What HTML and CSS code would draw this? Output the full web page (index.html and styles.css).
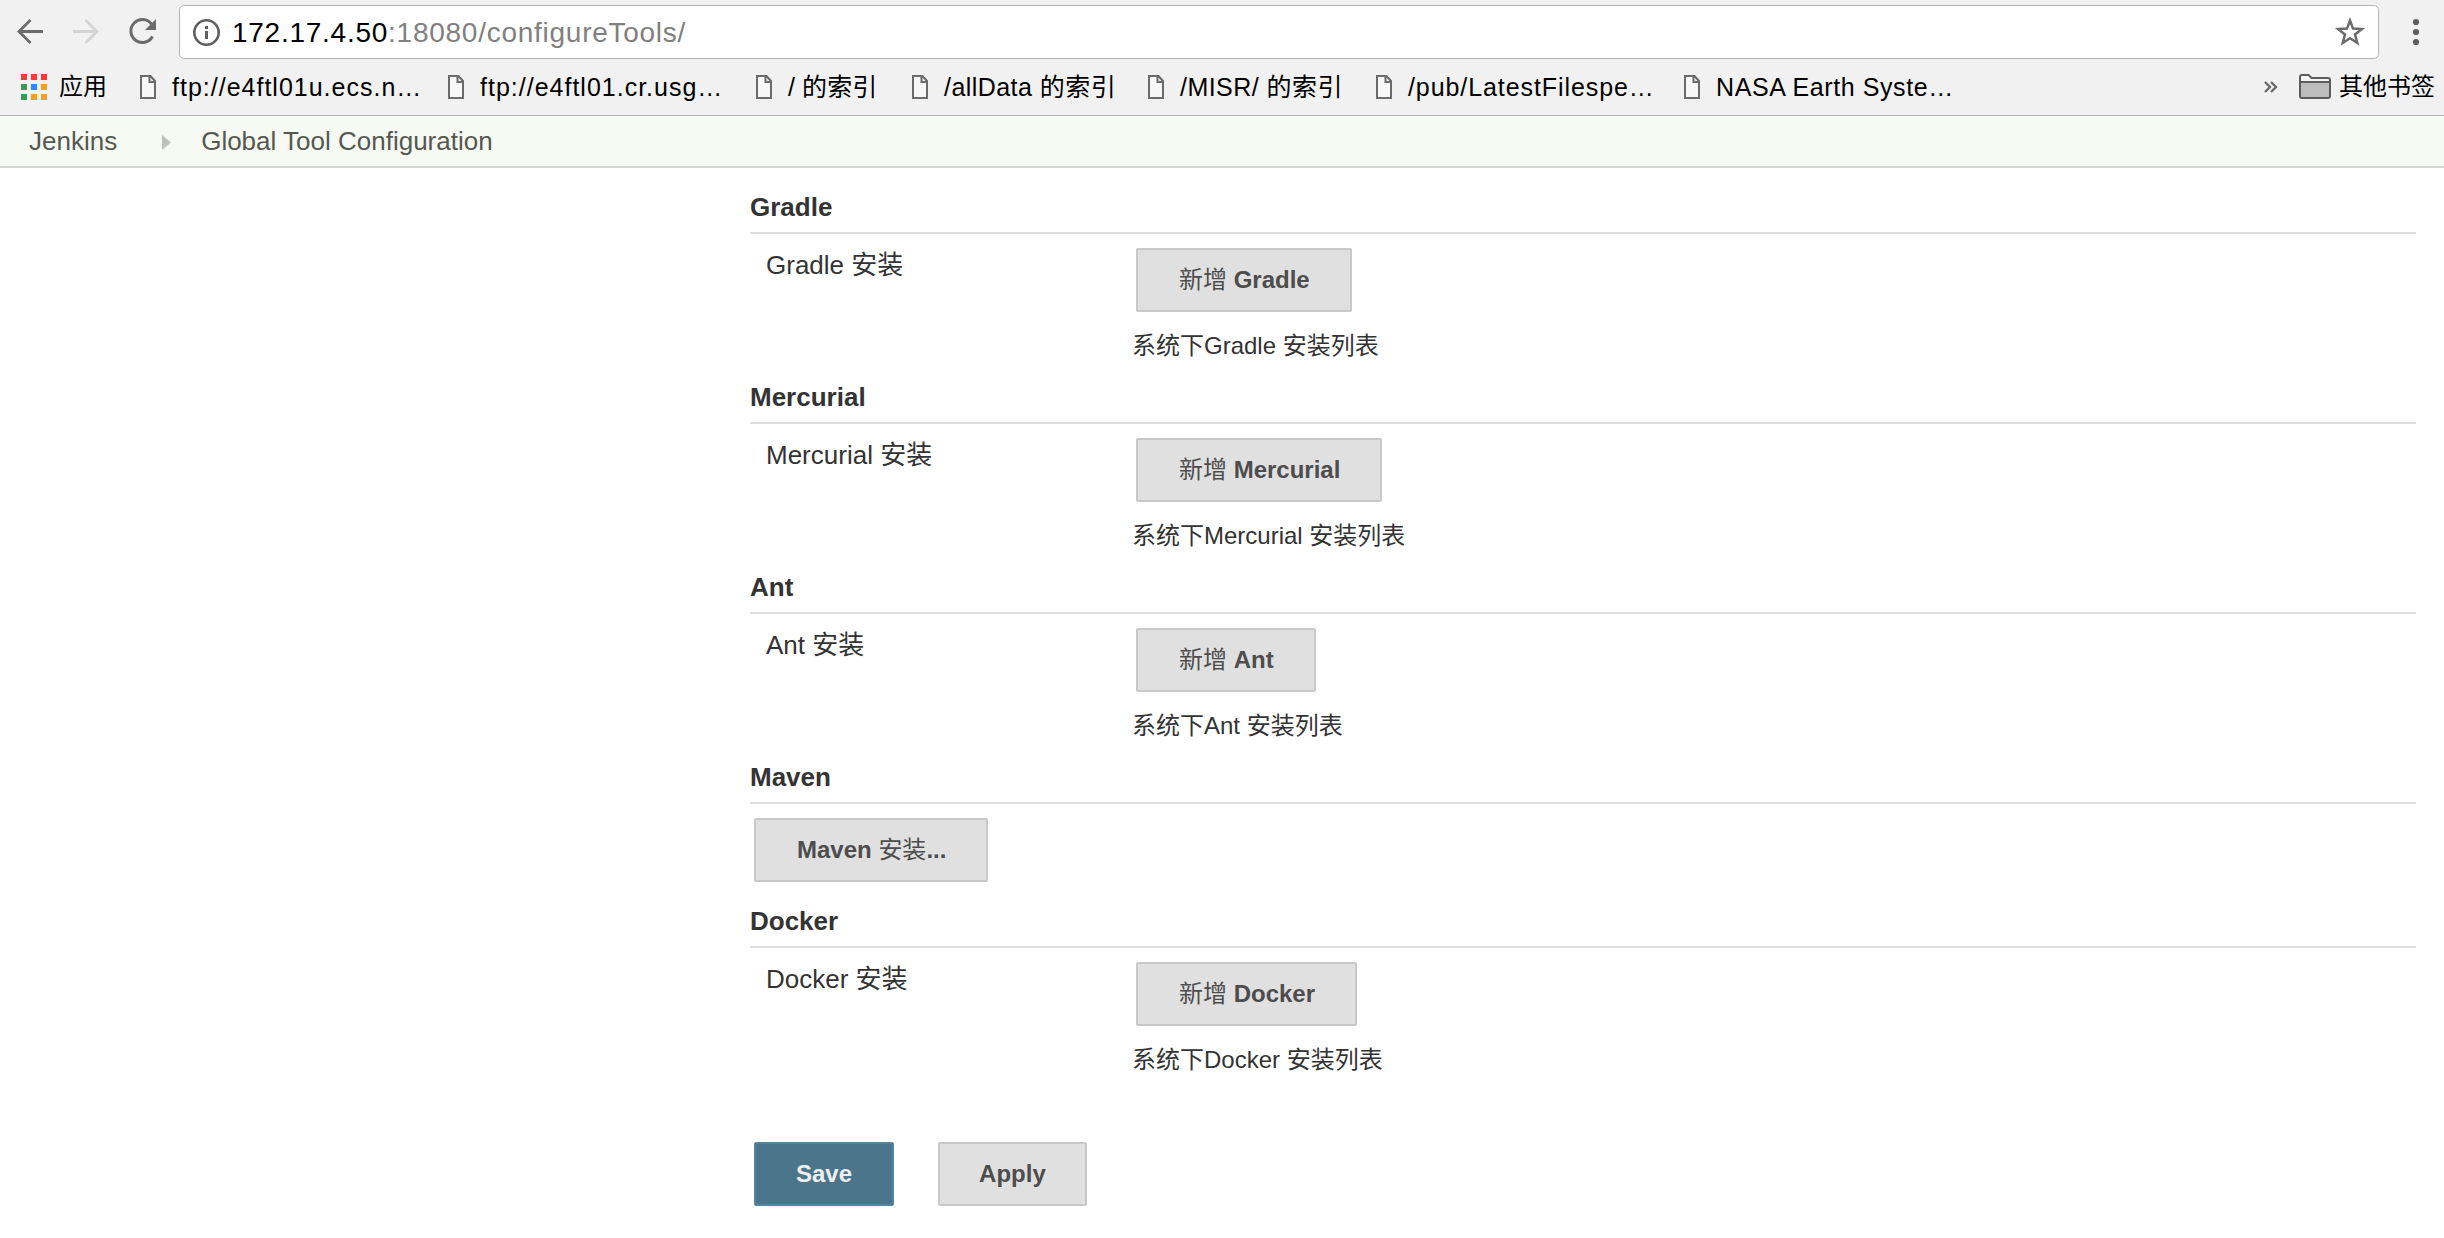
FILE: index.html
```html
<!DOCTYPE html>
<html lang="zh-CN">
<head>
<meta charset="utf-8">
<title>Global Tool Configuration</title>
<link rel="stylesheet" href="styles.css">
</head>
<body>
<svg class="defs" width="0" height="0"><defs>
<symbol id="page" viewBox="0 0 18 24"><path d="M1 1H10.500L15 6V23H1Z M9.500 1V7H15" fill="#f7f7f7" stroke="#6b6b6b" stroke-width="2"/></symbol>
</defs></svg>
<header class="chrome">
<div class="toolbar">
<svg class="nav" width="179" height="54" viewBox="0 5 179 54" fill="none">
<path d="M43 31.500H19M30.500 20L19 31.500L30.500 43" stroke="#6b6b6b" stroke-width="2.800"/>
<path d="M73 31.500H97M85.500 20L97 31.500L85.500 43" stroke="#d4d4d4" stroke-width="2.800"/>
<path d="M151.500 24A11.500 11.500 0 1 0 152.500 36.500" stroke="#6b6b6b" stroke-width="3"/><path d="M156 19V30H145Z" fill="#6b6b6b"/>
</svg>
<div class="address">
<svg width="52" height="52" viewBox="180 6 52 52"><circle cx="206.500" cy="32.500" r="12.200" fill="none" stroke="#5f5f5f" stroke-width="2.600"/><path d="M205 26h3v3h-3zM205 31h3v8h-3z" fill="#5f5f5f"/></svg>
<span class="url">172.17.4.50<span class="path">:18080/configureTools/</span></span>
<svg class="star" width="40" height="52" viewBox="2330 6 40 52"><path d="M2350 20.500L2353 28.600L2361.800 29L2355 34.400L2357.300 43L2350 38.200L2342.700 43L2345 34.400L2338.200 29L2347 28.600Z" fill="none" stroke="#6b6b6b" stroke-width="2.500"/></svg>
</div>
<svg class="menu" width="65" height="54" viewBox="2379 5 65 54" fill="#5f5f5f"><circle cx="2416" cy="22" r="3.100"/><circle cx="2416" cy="32" r="3.100"/><circle cx="2416" cy="42" r="3.100"/></svg>
</div>
<nav class="bookmarks">
<a class="apps"><svg width="26" height="26"><path d="M0 0h6v6H0zM10 0h6v6h-6zM20 0h6v6h-6z" fill="#f53b38"/><path d="M0 10h6v6H0z" fill="#389c59"/><path d="M10 10h6v6h-6z" fill="#2d87f5"/><path d="M20 10h6v6h-6zM10 20h6v6h-6zM20 20h6v6h-6z" fill="#efa023"/><path d="M0 20h6v6H0z" fill="#389c59"/></svg><span>应用</span></a>
<a class="mark m1"><svg><use href="#page"/></svg><span>ftp://e4ftl01u.ecs.n…</span></a>
<a class="mark m2"><svg><use href="#page"/></svg><span>ftp://e4ftl01.cr.usg…</span></a>
<a class="mark m3"><svg><use href="#page"/></svg><span>/ 的索引</span></a>
<a class="mark m4"><svg><use href="#page"/></svg><span>/allData 的索引</span></a>
<a class="mark m5"><svg><use href="#page"/></svg><span>/MISR/ 的索引</span></a>
<a class="mark m6"><svg><use href="#page"/></svg><span>/pub/LatestFilespe…</span></a>
<a class="mark m7"><svg><use href="#page"/></svg><span>NASA Earth Syste…</span></a>
<a class="other"><svg width="14" height="12" fill="none" stroke="#6b6b6b" stroke-width="2.400"><path d="M1 1L6 6L1 11M7 1L12 6L7 11"/></svg>
<svg class="folder" width="32" height="26" viewBox="0 0 32 26"><path d="M1 8V3Q1 1 3 1H10L13 4H29Q31 4 31 6V8Z" fill="#f7f7f7"/><path d="M1 8H31V22Q31 24 29 24H3Q1 24 1 22Z" fill="#bdbdbd"/><path d="M1 8V3Q1 1 3 1H9.500L12.500 4H29Q31 4 31 6V22Q31 24 29 24H3Q1 24 1 22V8H31" fill="none" stroke="#5c5c5c" stroke-width="2"/></svg><span>其他书签</span></a>
</nav>
</header>
<div class="crumbs"><span>Jenkins</span><svg width="9" height="15"><path d="M0 0L9 7.500L0 15Z" fill="#bfc1bc"/></svg><span>Global Tool Configuration</span></div>
<main>
<section><h2>Gradle</h2><div class="row"><label>Gradle 安装</label><div><button><i>新增</i> Gradle</button><p>系统下Gradle 安装列表</p></div></div></section>
<section><h2>Mercurial</h2><div class="row"><label>Mercurial 安装</label><div><button><i>新增</i> Mercurial</button><p>系统下Mercurial 安装列表</p></div></div></section>
<section><h2>Ant</h2><div class="row"><label>Ant 安装</label><div><button><i>新增</i> Ant</button><p>系统下Ant 安装列表</p></div></div></section>
<section class="short"><h2>Maven</h2><button>Maven <i>安装</i>...</button></section>
<section><h2>Docker</h2><div class="row"><label>Docker 安装</label><div><button><i>新增</i> Docker</button><p>系统下Docker 安装列表</p></div></div></section>
<div class="actions"><button class="primary">Save</button><button>Apply</button></div>
</main>
</body>
</html>
```
FILE: styles.css
```css
* { box-sizing: border-box; }
body { margin: 0; height: 1238px; overflow: hidden; background: #fff; color: #333; font: 26px/30px "Liberation Sans", "Noto Sans CJK SC", sans-serif; }
svg { display: block; flex: none; }
.defs { position: absolute; }
.chrome { height: 116px; padding-top: 5px; background: #f1f1f1; border-bottom: 1px solid #b5b5b5; color: #000; }
.toolbar { display: flex; height: 54px; }
.address { flex: 1; display: flex; align-items: center; background: #fff; border: 1px solid #b5b5b5; border-radius: 5px; }
.url { padding-top: 2px; font-size: 28px; line-height: 32px; letter-spacing: .74px; white-space: nowrap; }
.path { color: #808080; }
.star { margin-left: auto; margin-right: 8px; }
.bookmarks { display: flex; height: 56px; padding: 0 9px 0 21px; align-items: center; font-size: 25px; white-space: nowrap; }
.apps, .mark, .other { display: flex; align-items: center; height: 30px; }
.apps { width: 119px; gap: 12px; font-size: 24px; }
.mark { gap: 14px; }
.mark svg { width: 18px; height: 24px; }
.m1, .m2 { width: 308px; letter-spacing: 1px; }
.m3 { width: 156px; letter-spacing: .1px; }
.m4 { width: 236px; letter-spacing: .45px; }
.m5 { width: 228px; letter-spacing: .45px; }
.m6 { width: 308px; letter-spacing: .92px; }
.m7 { letter-spacing: .58px; }
.other { margin-left: auto; font-size: 24px; }
.folder { margin: 0 8px 0 21px; }
.crumbs { display: flex; align-items: center; height: 52px; padding-left: 29px; background: #f6faf2; border-bottom: 2px solid #d3d6cf; color: #555852; }
.crumbs svg { margin: 3px 30px 0 45px; }
main { padding: 24px 28px 0 750px; }
section { height: 190px; }
.short { height: 144px; }
h2 { margin: 0 0 14px; height: 42px; border-bottom: 2px solid #dedede; font-size: 26px; line-height: 30px; }
.row { display: grid; grid-template-columns: 384px 1fr; }
label { padding: 2px 0 0 16px; }
button { display: block; height: 64px; margin: 0 0 0 2px; padding: 0 40px 0 41px; border: 2px solid #c8c8c8; border-radius: 2px; background: #e0e0e0; color: #4d4d4d; font: bold 24px/28px "Liberation Sans", "Noto Sans CJK SC", sans-serif; white-space: nowrap; }
.short button, .actions button { margin-left: 4px; }
i { font-style: normal; font-weight: 400; }
p { margin: 20px 0 0 -2px; font-size: 24px; line-height: 28px; }
.actions { display: flex; padding-top: 46px; }
.actions button { padding: 0 40px; }
.actions button + button { margin-left: 44px; padding: 0 39px; }
.actions .primary { background: #4b758b; border-color: #5286a0; color: #eee; }
```
